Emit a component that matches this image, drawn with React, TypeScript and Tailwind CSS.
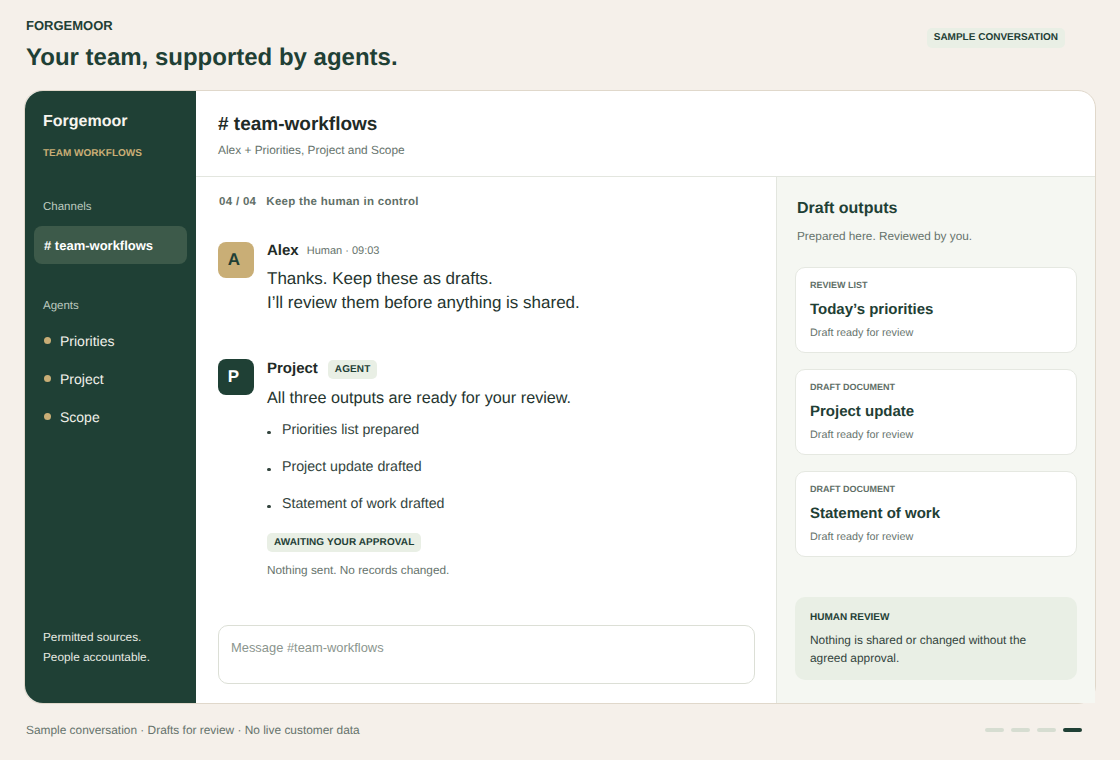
import React from 'react';

const outputs = [
  { label: 'REVIEW LIST', title: 'Today’s priorities' },
  { label: 'DRAFT DOCUMENT', title: 'Project update' },
  { label: 'DRAFT DOCUMENT', title: 'Statement of work' },
];

const agents = ['Priorities', 'Project', 'Scope'];
const checklist = ['Priorities list prepared', 'Project update drafted', 'Statement of work drafted'];

function Sidebar() {
  return (
    <aside className="flex w-[171px] shrink-0 flex-col rounded-l-[18px] bg-[#1f4035] text-white">
      <div className="px-[18px] pt-[21px]">
        <h1 className="text-[16px] font-bold leading-[20px] text-[#f7f5ef]">Forgemoor</h1>
        <p className="mt-[16px] text-[10px] font-bold leading-[12px] text-[#c9ae76]">TEAM WORKFLOWS</p>
        <p className="mt-[40px] text-[11.5px] leading-[14px] text-[#bcc9bf]">Channels</p>
      </div>
      <div className="mx-[9px] mt-[12px] flex h-[38px] items-center rounded-[8px] bg-[#3d5a4a] px-[10px] pt-[2px] text-[13px] font-bold text-white">
        # team-workflows
      </div>
      <p className="mt-[35px] px-[18px] text-[11.5px] leading-[14px] text-[#bcc9bf]">Agents</p>
      <ul className="mt-[9px] flex flex-col">
        {agents.map((a) => (
          <li key={a} className="flex h-[38px] items-center gap-[9px] pl-[19px] text-[14px] text-[#f1f1ea]">
            <span className="mb-[2px] h-[7px] w-[7px] rounded-full bg-[#c9ae76]" />
            {a}
          </li>
        ))}
      </ul>
      <div className="mt-auto px-[18px] pb-[36px] text-[11.8px] leading-[20px] text-[#e8ebe3]">
        <p>Permitted sources.</p>
        <p>People accountable.</p>
      </div>
    </aside>
  );
}

function Conversation() {
  return (
    <section className="flex w-[580px] shrink-0 flex-col px-[22px] pt-[17px]">
      <p className="pl-px text-[11.5px] font-bold leading-[16px] tracking-[0.3px] text-[#5f6f67]">
        04 / 04<span className="ml-[10px]">Keep the human in control</span>
      </p>

      <div className="mt-[32px] flex gap-[13px]">
        <div className="flex h-[36px] w-[36px] shrink-0 items-center justify-center rounded-[8px] bg-[#c9ae76] pr-[4px] text-[17px] font-bold text-[#1f4035]">
          A
        </div>
        <div className="-mt-[1px]">
          <div className="flex items-center gap-[8px]">
            <span className="text-[15px] font-bold leading-[20px] text-[#1f2b27]">Alex</span>
            <span className="text-[11px] leading-[20px] text-[#66736c]">Human · 09:03</span>
          </div>
          <p className="mt-[6px] text-[17px] leading-[24px] text-[#25352f]">
            Thanks. Keep these as drafts.
            <br />
            I’ll review them before anything is shared.
          </p>
        </div>
      </div>

      <div className="mt-[44px] flex gap-[13px]">
        <div className="flex h-[36px] w-[36px] shrink-0 items-center justify-center rounded-[8px] bg-[#1f4035] pb-[1px] pr-[5px] text-[17px] font-bold text-white">
          P
        </div>
        <div>
          <div className="flex items-center gap-[10px]">
            <span className="text-[15px] font-bold leading-[20px] text-[#1f2b27]">Project</span>
            <span className="rounded-[5px] bg-[#e9efe5] px-[7px] py-[3px] text-[10px] font-bold leading-[13px] tracking-[0.1px] text-[#1f4035]">
              AGENT
            </span>
          </div>
          <p className="mt-[7px] text-[16.2px] leading-[24px] text-[#25352f]">All three outputs are ready for your review.</p>
          <ul className="mt-[10px] flex flex-col gap-[16px]">
            {checklist.map((c) => (
              <li key={c} className="flex items-center gap-[11.5px] text-[14.2px] leading-[21px] text-[#33443d]">
                <span className="mt-[4px] h-[3.5px] w-[3.5px] rounded-full bg-[#33443d]" />
                {c}
              </li>
            ))}
          </ul>
          <span className="mt-[18px] inline-block rounded-[5px] bg-[#e9efe5] px-[7px] py-[3px] text-[10px] font-bold leading-[13px] tracking-[0.1px] text-[#1f4035]">
            AWAITING YOUR APPROVAL
          </span>
          <p className="mt-[9px] text-[11.8px] leading-[16px] text-[#66736c]">Nothing sent. No records changed.</p>
        </div>
      </div>

      <textarea
        readOnly
        placeholder="Message #team-workflows"
        className="mb-[19px] mt-auto h-[59px] w-[537px] resize-none rounded-[10px] border border-[#dcdfd6] bg-white px-[12px] py-[13px] text-[12.9px] leading-[18px] outline-none placeholder:text-[#8b958e]"
      />
    </section>
  );
}

function DraftPanel() {
  return (
    <aside className="flex w-[319px] shrink-0 flex-col border-l border-[#e3e6df] bg-[#f5f7f2] pb-[23px] pl-[18px] pr-[18px] pt-[22px]">
      <h3 className="pl-[2px] text-[16px] font-bold leading-[20px] text-[#1f4035]">Draft outputs</h3>
      <p className="mt-[9px] pl-[2px] text-[11.8px] leading-[16px] text-[#66736c]">Prepared here. Reviewed by you.</p>
      <div className="mt-[23px] flex flex-col gap-[16px]">
        {outputs.map((o) => (
          <div key={o.title} className="h-[86px] rounded-[10px] border border-[#e5e8e1] bg-white px-[14px] pt-[12px]">
            <p className="text-[9px] font-bold leading-[11px] text-[#5f6f67]">{o.label}</p>
            <p className="mt-[9px] text-[15px] font-bold leading-[20px] text-[#1f4035]">{o.title}</p>
            <p className="mt-[6px] text-[10.8px] leading-[14px] text-[#66736c]">Draft ready for review</p>
          </div>
        ))}
      </div>
      <div className="mt-auto h-[83px] rounded-[10px] bg-[#e9efe5] px-[15px] pt-[14px]">
        <p className="text-[10px] font-bold leading-[13px] text-[#1f4035]">HUMAN REVIEW</p>
        <p className="mt-[7px] text-[11.9px] leading-[18px] text-[#33443d]">
          Nothing is shared or changed without the agreed approval.
        </p>
      </div>
    </aside>
  );
}

export default function App() {
  return (
    <div className="flex h-[760px] w-[1120px] flex-col overflow-hidden bg-[#f5f0ea] font-['Liberation_Sans',sans-serif] [text-rendering:geometricPrecision]">
      <header className="flex h-[90px] shrink-0 items-start justify-between pl-[26px] pr-[55px] pt-[18px]">
        <div>
          <p className="text-[13px] font-bold leading-[16px] text-[#1f4035]">FORGEMOOR</p>
          <h2 className="mt-[9px] text-[24px] font-bold leading-[30px] text-[#1f4035]">Your team, supported by agents.</h2>
        </div>
        <span className="mt-[10px] rounded-[5px] bg-[#e9efe5] px-[7px] py-[3px] text-[10px] font-bold leading-[14px] text-[#1f4035]">
          SAMPLE CONVERSATION
        </span>
      </header>

      <main className="mx-[24px] flex h-[614px] shrink-0 rounded-[18px] border border-[#e0d8cb] bg-white">
        <Sidebar />
        <div className="flex min-w-0 flex-1 flex-col">
          <div className="h-[86px] shrink-0 border-b border-[#e3e6df] pl-[22px] pt-[22px]">
            <h2 className="text-[19px] font-bold leading-[24px] text-[#1f2b27]">
              # team-workflows
            </h2>
            <p className="mt-[5px] text-[11.9px] leading-[16px] text-[#66736c]">Alex + Priorities, Project and Scope</p>
          </div>
          <div className="flex min-h-0 flex-1">
            <Conversation />
            <DraftPanel />
          </div>
        </div>
      </main>

      <footer className="flex flex-1 items-center justify-between pl-[26px] pr-[38px] pb-[4px]">
        <p className="mt-[2px] text-[11.9px] text-[#66736c]">Sample conversation · Drafts for review · No live customer data</p>
        <div className="flex gap-[7px]">
          <span className="h-[4px] w-[19px] rounded-full bg-[#d6ddd1]" />
          <span className="h-[4px] w-[19px] rounded-full bg-[#d6ddd1]" />
          <span className="h-[4px] w-[19px] rounded-full bg-[#d6ddd1]" />
          <span className="h-[4px] w-[19px] rounded-full bg-[#1f4035]" />
        </div>
      </footer>
    </div>
  );
}
